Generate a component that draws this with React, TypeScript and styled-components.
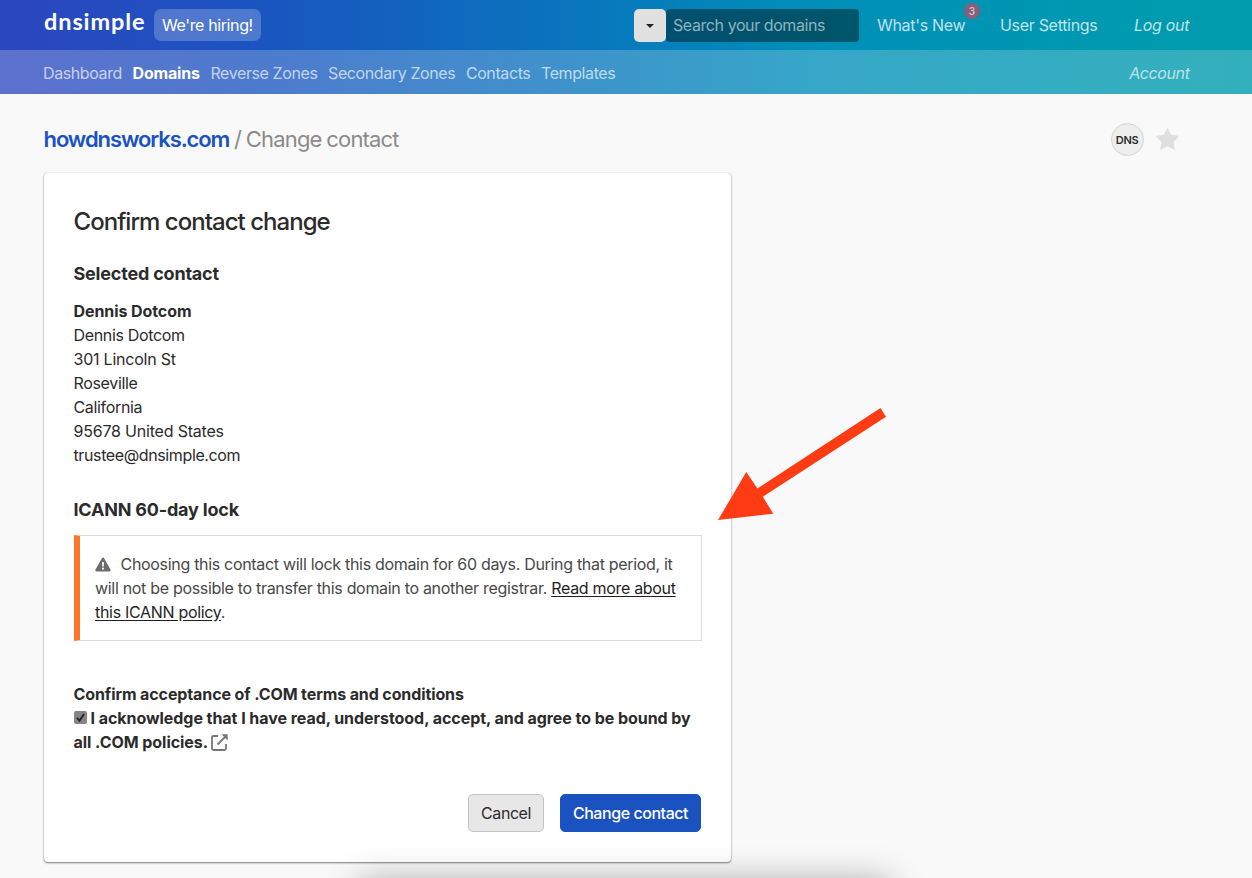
import React from "react";
import styled, { createGlobalStyle, css } from "styled-components";

const GlobalStyle = createGlobalStyle`
  *, *::before, *::after { box-sizing: border-box; }
  html, body { margin: 0; padding: 0; }
  body {
    background: #f9f9f9;
    color: #2b2b2b;
    font-family: Inter, "Liberation Sans", sans-serif;
    font-size: 16px;
    line-height: 24px;
    letter-spacing: -0.31px;
    overflow: hidden;
  }
`;

const Page = styled.div`
  position: relative;
  height: 878px;
  overflow: hidden;
`;

const Header = styled.header`
  background: linear-gradient(90deg, #2c46bf 0%, #1a55c0 21%, #0877bd 47%, #008fb9 65%, #0099b0 88%, #009cac 100%);
`;

const TopBar = styled.div`
  display: flex;
  align-items: center;
  height: 50px;
  padding: 0 62px 0 44px;
`;

const Logo = styled.a`
  color: #fff;
  font-family: Lato, sans-serif;
  font-size: 23.5px;
  font-weight: 700;
  line-height: 28px;
  letter-spacing: 0.9px;
  width: 110px;
  margin-top: -9px;
`;

const Hiring = styled.a`
  display: flex;
  align-items: center;
  height: 32px;
  width: 107px;
  padding: 0 8px;
  border-radius: 7px;
  background: rgba(255, 255, 255, 0.22);
  color: #fff;
  letter-spacing: -0.38px;
  white-space: nowrap;
`;

const Search = styled.div`
  display: flex;
  margin-left: auto;
  margin-top: 1px;
  height: 33px;
`;

const SearchToggle = styled.button`
  display: flex;
  align-items: center;
  justify-content: center;
  width: 32px;
  padding: 0;
  border: 0;
  border-radius: 5px;
  background: #e1e1e1;
`;

const SearchField = styled.div`
  width: 193px;
  padding: 4px 7px;
  border-radius: 4px;
  background: linear-gradient(90deg, #014f6f, #00566a);
  color: #8fb3bf;
  letter-spacing: -0.42px;
`;

const TopLink = styled.a<{ $italic?: boolean; $width: number }>`
  position: relative;
  width: ${(p) => p.$width}px;
  white-space: nowrap;
  color: rgba(255, 255, 255, 0.75);
  font-style: ${(p) => (p.$italic ? "italic" : "normal")};
`;

const Badge = styled.span`
  position: absolute;
  top: -10px;
  left: 87px;
  width: 16px;
  height: 16px;
  border-radius: 50%;
  background: #89607a;
  color: #cfc3cd;
  font-size: 10px;
  font-weight: 600;
  line-height: 16px;
  letter-spacing: 0;
  text-align: center;
`;

const TopLinks = styled.nav`
  display: flex;
  gap: 36px;
  margin-left: 18px;
`;

const SubNav = styled.nav`
  display: flex;
  align-items: center;
  gap: 10.6px;
  height: 44px;
  padding: 2px 62.5px 0 43px;
  background: linear-gradient(90deg, rgba(255, 255, 255, 0.23), rgba(255, 255, 255, 0.2));
`;

const NavLink = styled.a<{ $active?: boolean; $end?: boolean }>`
  color: rgba(255, 255, 255, 0.68);
  letter-spacing: -0.4px;
  ${(p) =>
    p.$active &&
    css`
      color: #fff;
      font-weight: 700;
      letter-spacing: -0.18px;
    `}
  ${(p) =>
    p.$end &&
    css`
      margin-left: auto;
      font-style: italic;
    `}
`;

const TitleRow = styled.div`
  display: flex;
  align-items: center;
  height: 79px;
  padding: 11px 72.5px 0 43.5px;
`;

const Breadcrumb = styled.h1`
  flex: 1;
  margin: 0;
  color: #8a8a8a;
  font-size: 22px;
  font-weight: 400;
  line-height: 30px;
  letter-spacing: -0.82px;
  word-spacing: -0.7px;
`;

const DomainLink = styled.a`
  color: #1a53c0;
  font-weight: 600;
  letter-spacing: -1.09px;
`;

const DnsBadge = styled.span`
  width: 33px;
  height: 33px;
  margin-right: 11px;
  border: 1px solid #d4d4d4;
  border-radius: 50%;
  background: #eee;
  font-size: 11px;
  font-weight: 600;
  line-height: 32px;
  letter-spacing: -0.35px;
  text-align: center;
`;

const Card = styled.main`
  display: flex;
  flex-direction: column;
  width: 687px;
  height: 689px;
  margin-left: 44px;
  padding: 30px 30px 30px 29.5px;
  border-radius: 4px;
  background: #fff;
  box-shadow: 0 1px 2px rgba(0, 0, 0, 0.5), 0 0 1px rgba(0, 0, 0, 0.25);
`;

const CardTitle = styled.h2`
  margin: 0;
  font-size: 24px;
  font-weight: 500;
  line-height: 38px;
  letter-spacing: -0.97px;
`;

const Subheading = styled.h3<{ $top: number }>`
  margin: ${(p) => p.$top}px 0 0;
  font-size: 18px;
  font-weight: 650;
  line-height: 26px;
  letter-spacing: -0.2px;
`;

const Address = styled.address`
  display: flex;
  flex-direction: column;
  margin-top: 12px;
  font-style: normal;
  letter-spacing: -0.33px;
`;

const AddressLine = styled.span<{ $spacing?: number }>`
  letter-spacing: ${(p) => p.$spacing ?? -0.33}px;
`;

const ContactName = styled.strong`
  font-weight: 650;
  letter-spacing: -0.08px;
`;

const Notice = styled.div`
  width: 628px;
  height: 106px;
  margin-top: 12px;
  padding: 16px 18px 0 15.5px;
  border: 1px solid #dcdcdc;
  border-left: 6px solid #ff762b;
  color: #484848;
  letter-spacing: -0.31px;

  svg {
    margin-right: 9.5px;
    vertical-align: -2px;
  }

  a {
    color: #1f1f1f;
    text-decoration: underline;
    text-underline-offset: 2px;
  }
`;

const Terms = styled.div`
  margin-top: 41px;
  font-weight: 650;
  letter-spacing: -0.11px;

  svg {
    vertical-align: -3px;
  }
`;

const Consent = styled.span`
  letter-spacing: -0.05px;
`;

const CheckMark = styled.span`
  display: inline-flex;
  width: 13px;
  height: 13px;
  margin-right: 4px;
  border-radius: 2px;
  background: #858585;
  vertical-align: 0;

  svg {
    display: block;
  }
`;

const Actions = styled.div`
  display: flex;
  justify-content: flex-end;
  gap: 16px;
  margin-top: 40px;
`;

const Button = styled.button<{ $primary?: boolean }>`
  height: 38px;
  width: ${(p) => (p.$primary ? 141 : 76)}px;
  padding: 0;
  border: 1px solid ${(p) => (p.$primary ? "#1a53c0" : "#c3c3c3")};
  border-radius: 5px;
  background: ${(p) => (p.$primary ? "#1a53c0" : "#e7e7e7")};
  color: ${(p) => (p.$primary ? "#fff" : "#2b2b2b")};
  font: inherit;
  font-weight: ${(p) => (p.$primary ? 500 : 400)};
  letter-spacing: -0.45px;
`;

const Arrow = styled.svg`
  position: absolute;
  left: 715px;
  top: 404px;
`;

const BottomShade = styled.div`
  position: absolute;
  left: 362px;
  top: 884px;
  width: 525px;
  height: 60px;
  box-shadow: 0 0 34px 4px rgba(0, 0, 0, 0.3);
`;

const addressLines: { text: string; spacing?: number }[] = [
  { text: "Dennis Dotcom" },
  { text: "301 Lincoln St", spacing: -0.22 },
  { text: "Roseville" },
  { text: "California" },
  { text: "95678 United States", spacing: -0.2 },
  { text: "trustee@dnsimple.com", spacing: -0.38 },
];

export default function App() {
  return (
    <Page>
      <GlobalStyle />
      <Header>
        <TopBar>
          <Logo>dnsimple</Logo>
          <Hiring>We're hiring!</Hiring>
          <Search>
            <SearchToggle>
              <svg width="8" height="4" viewBox="0 0 8 4">
                <path d="M0 0h8L4 4z" fill="#222" />
              </svg>
            </SearchToggle>
            <SearchField>Search your domains</SearchField>
          </Search>
          <TopLinks>
            <TopLink $width={87}>
              What's New
              <Badge>3</Badge>
            </TopLink>
            <TopLink $width={98}>User Settings</TopLink>
            <TopLink $width={56} $italic>
              Log out
            </TopLink>
          </TopLinks>
        </TopBar>
        <SubNav>
          <NavLink>Dashboard</NavLink>
          <NavLink $active>Domains</NavLink>
          <NavLink>Reverse Zones</NavLink>
          <NavLink>Secondary Zones</NavLink>
          <NavLink>Contacts</NavLink>
          <NavLink>Templates</NavLink>
          <NavLink $end>Account</NavLink>
        </SubNav>
      </Header>
      <TitleRow>
        <Breadcrumb>
          <DomainLink>howdnsworks.com</DomainLink> / Change contact
        </Breadcrumb>
        <DnsBadge>DNS</DnsBadge>
        <svg width="25" height="24" viewBox="0 0 25 24">
          <path
            d="M12.5 2l3.1 6.6 7.2 1-5.2 5 1.3 7.2-6.4-3.5-6.4 3.5 1.3-7.2-5.2-5 7.2-1z"
            fill="#dfdfdf"
            stroke="#dfdfdf"
            strokeWidth="1.6"
            strokeLinejoin="round"
          />
        </svg>
      </TitleRow>
      <Card>
        <CardTitle>Confirm contact change</CardTitle>
        <Subheading $top={20}>Selected contact</Subheading>
        <Address>
          <ContactName>Dennis Dotcom</ContactName>
          {addressLines.map((line) => (
            <AddressLine key={line.text} $spacing={line.spacing}>
              {line.text}
            </AddressLine>
          ))}
        </Address>
        <Subheading $top={30}>ICANN 60-day lock</Subheading>
        <Notice>
          <svg width="16" height="15" viewBox="0 0 16 15">
            <path
              d="M8 .6c.5 0 .9.2 1.1.7l6.4 11.2c.6 1-.1 1.9-1.1 1.9H1.6c-1 0-1.7-.9-1.1-1.9L6.9 1.3C7.1.8 7.5.6 8 .6z"
              fill="#6c6c6c"
            />
            <path d="M8 5v4.500" stroke="#fff" strokeWidth="1.7" />
            <circle cx="8" cy="11.600" r="1.1" fill="#fff" />
          </svg>
          Choosing this contact will lock this domain for 60 days. During that period, it will not be possible to
          transfer this domain to another registrar. <a>Read more about this ICANN policy</a>.
        </Notice>
        <Terms>
          Confirm acceptance of .COM terms and conditions
          <br />
          <CheckMark>
            <svg width="13" height="13" viewBox="0 0 13 13">
              <path d="M3 6.800l2.500 2.900L10 3" fill="none" stroke="#222" strokeWidth="1.8" />
            </svg>
          </CheckMark>
          <Consent>
            I acknowledge that I have read, understood, accept, and agree to be bound by all .COM policies.{" "}
          </Consent>
          <svg width="17" height="17" viewBox="0 0 17 17" fill="none" stroke="#777" strokeWidth="1.8">
            <path d="M7 2H2.500Q1 2 1 3.500v11Q1 16 2.500 16h11Q15 16 15 14.500V10" />
            <path d="M6.500 10.500L14.500 2.500" />
            <path d="M10.500.3H16.700V6.500z" fill="#777" stroke="none" />
          </svg>
        </Terms>
        <Actions>
          <Button>Cancel</Button>
          <Button $primary>Change contact</Button>
        </Actions>
      </Card>
      <BottomShade />
      <Arrow width="175" height="120" viewBox="715 404 175 120">
        <path d="M880.500 408L886 416.700 762.800 496.700 773.300 513.700 718 520 746.300 472 757.400 488.500z" fill="#ff3b14" />
      </Arrow>
    </Page>
  );
}
